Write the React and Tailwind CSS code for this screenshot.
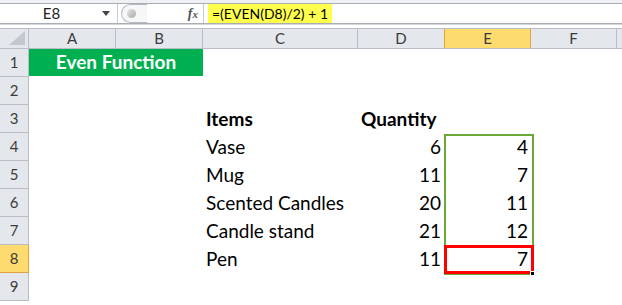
import React from "react"

const cols = [
  { name: "A", w: "w-[87px]" },
  { name: "B", w: "w-[87px]" },
  { name: "C", w: "w-[155px]" },
  { name: "D", w: "w-[87px]" },
  { name: "E", w: "w-[87px]" },
  { name: "F", w: "w-[86px]" },
]

const items = [
  { row: 4, name: "Vase", qty: 6, val: 4 },
  { row: 5, name: "Mug", qty: 11, val: 7 },
  { row: 6, name: "Scented Candles", qty: 20, val: 11 },
  { row: 7, name: "Candle stand", qty: 21, val: 12 },
  { row: 8, name: "Pen", qty: 11, val: 7 },
]

function RowHead({ n }) {
  const active = n === 8
  return (
    <div
      className={`w-[29px] h-[28px] shrink-0 flex items-center justify-center text-[15px] border-b border-r ${
        active
          ? "bg-[#fedb6f] border-[#e3a23f] text-[#3c3c3c]"
          : "bg-[#e4e7ec] border-[#b9bec6] text-[#3c3c3c]"
      }`}
    >
      {n}
    </div>
  )
}

function Row({ n, children }) {
  return (
    <div className="flex h-[28px]">
      <RowHead n={n} />
      {children}
    </div>
  )
}

export default function App() {
  return (
    <div className="w-[622px] h-[305px] overflow-hidden bg-white font-['Lato','Open_Sans',sans-serif] text-black">
      {/* formula bar */}
      <div className="h-[28px] bg-[#f3f4f6] flex flex-col">
        <div className="h-[3px] bg-[#eef0f3]" />
        <div className="flex h-[21px] bg-white border-y border-[#a9aeb5]">
          <div className="w-[118px] flex items-center relative border-r border-[#c8ccd2]">
            <span className="w-full text-center text-[15px] pr-[14px] text-[#222]">E8</span>
            <svg className="absolute right-[7px] top-[7px]" width="8" height="5" viewBox="0 0 8 5">
              <path d="M0 0h8L4 5z" fill="#444" />
            </svg>
          </div>
          <div className="w-[85px] flex items-center relative bg-white">
            <div className="ml-[3px] w-[26px] h-[19px] rounded-l-full border border-r-0 border-[#b5b9bf] flex items-center pl-[5px] bg-[#f6f7f8]">
              <div className="w-[9px] h-[9px] rounded-full bg-gradient-to-br from-[#e8e8e8] to-[#a8a8a8]" />
            </div>
            <span className="ml-auto mr-[5px] italic font-['Liberation_Serif',serif] font-bold text-[14px] text-[#555]">
              f<span className="text-[11px]">x</span>
            </span>
          </div>
          <div className="flex-1 flex items-stretch border-l border-[#c8ccd2]">
            <div className="ml-[4px] w-[124px] bg-[#ffff4d] flex items-center justify-center text-[14px] text-black whitespace-nowrap">
              =(EVEN(D8)/2) + 1
            </div>
          </div>
        </div>
        <div className="h-[1px] bg-[#d3d6da]" />
        <div className="flex-1 bg-white" />
      </div>

      {/* sheet */}
      <div className="relative">
        <div className="flex h-[21px] border-y border-[#b9bec6] bg-[#e4e7ec] text-[15px] text-[#3c3c3c]">
          <div className="w-[29px] shrink-0 border-r border-[#b9bec6] flex items-end justify-end p-[3px]">
            <svg width="16" height="14" viewBox="0 0 16 14">
              <path d="M16 0V14H0z" fill="#c4c8ce" />
            </svg>
          </div>
          {cols.map((c) => (
            <div
              key={c.name}
              className={`${c.w} shrink-0 flex items-center justify-center border-r ${
                c.name === "E"
                  ? "bg-[#fedb6f] border-[#e3a23f] border-l -ml-px"
                  : "border-[#b9bec6]"
              }`}
            >
              {c.name}
            </div>
          ))}
        </div>

        <Row n={1}>
          <div className="w-[174px] h-[27px] bg-[#00b050] text-white font-bold text-[19px] flex items-center justify-center">
            Even Function
          </div>
        </Row>
        <Row n={2} />
        <Row n={3}>
          <div className="w-[174px]" />
          <div className="w-[155px] pl-[3px] font-bold text-[19px] flex items-center">Items</div>
          <div className="w-[87px] pl-[3px] font-bold text-[19px] flex items-center whitespace-nowrap">Quantity</div>
        </Row>
        {items.map((it) => (
          <Row key={it.row} n={it.row}>
            <div className="w-[174px]" />
            <div className="w-[155px] pl-[3px] text-[19px] flex items-center whitespace-nowrap">{it.name}</div>
            <div className="w-[87px] pr-[4px] text-[19px] flex items-center justify-end">{it.qty}</div>
            <div className="w-[87px] pr-[4px] text-[19px] flex items-center justify-end">{it.val}</div>
          </Row>
        ))}
        <Row n={9} />

        {/* selection overlays */}
        <div className="absolute left-[444px] top-[106px] w-[90px] h-[141px] border-2 border-[#6aa935]" />
        <div className="absolute left-[444px] top-[217px] w-[90px] h-[29px] border-[3px] border-[#ff0000]" />
        <div className="absolute left-[530px] top-[243px] w-[5px] h-[5px] bg-black border border-white" />
      </div>
    </div>
  )
}
